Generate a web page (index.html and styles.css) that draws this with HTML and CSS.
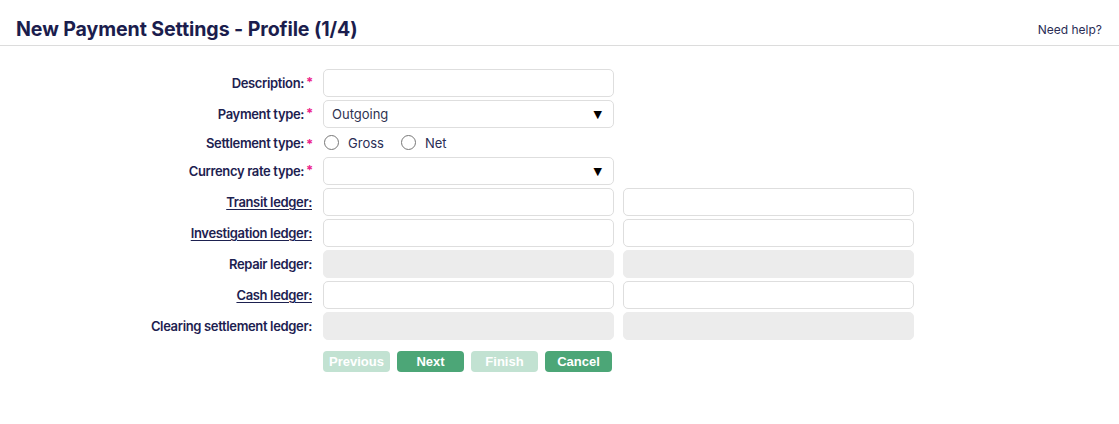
FILE: index.html
```html
<!DOCTYPE html>
<html>
<head>
<meta charset="utf-8">
<link rel="stylesheet" href="styles.css">
</head>
<body>
<header class="header">
  <h1 class="title">New Payment Settings - Profile (1/4)</h1>
  <a class="help" href="#">Need help?</a>
</header>
<form class="form">
  <label class="label">Description:<span class="req">*</span></label>
  <div class="input"></div>
  <div></div>

  <label class="label">Payment type:<span class="req">*</span></label>
  <div class="input select"><span class="value">Outgoing</span><span class="arrow">▼</span></div>
  <div></div>

  <label class="label">Settlement type:<span class="req">*</span></label>
  <div class="radios">
    <span class="radio"></span><span class="rlabel">Gross</span>
    <span class="radio"></span><span class="rlabel">Net</span>
  </div>
  <div></div>

  <label class="label">Currency rate type:<span class="req">*</span></label>
  <div class="input select"><span class="value"></span><span class="arrow">▼</span></div>
  <div></div>

  <label class="label"><a class="link" href="#">Transit ledger:</a></label>
  <div class="input"></div>
  <div class="input"></div>

  <label class="label"><a class="link" href="#">Investigation ledger:</a></label>
  <div class="input"></div>
  <div class="input"></div>

  <label class="label">Repair ledger:</label>
  <div class="input disabled"></div>
  <div class="input disabled"></div>

  <label class="label"><a class="link" href="#">Cash ledger:</a></label>
  <div class="input"></div>
  <div class="input"></div>

  <label class="label">Clearing settlement ledger:</label>
  <div class="input disabled"></div>
  <div class="input disabled"></div>

  <div></div>
  <div class="buttons">
    <button type="button" class="btn off">Previous</button>
    <button type="button" class="btn">Next</button>
    <button type="button" class="btn off">Finish</button>
    <button type="button" class="btn">Cancel</button>
  </div>
</form>
</body>
</html>
```
FILE: styles.css
```css
* { box-sizing: border-box; }
body {
  margin: 0;
  background: #fff;
  font-family: Inter, "Noto Sans", sans-serif;
  color: #1d2150;
}
.header {
  height: 46px;
  border-bottom: 1px solid #dcdcdc;
  display: flex;
  align-items: center;
  justify-content: space-between;
  padding: 0 17px 0 16px;
}
.title {
  margin: 0;
  font-size: 19.6px;
  font-weight: 700;
  color: #1b1d4d;
  letter-spacing: -0.1px;
  padding-top: 12px;
}
.help {
  font-size: 12px;
  color: #2a2d55;
  text-decoration: none;
  padding-top: 14px;
}
.form {
  display: grid;
  grid-template-columns: 312px 302px 300px;
  grid-template-rows: 28px 28px 23px repeat(6, 28px) 32px;
  row-gap: 3px;
  margin-top: 23px;
}
.label {
  display: flex;
  align-items: center;
  justify-content: flex-end;
  font-size: 13px;
  font-weight: 600;
  letter-spacing: -0.35px;
  color: #1d2150;
  white-space: nowrap;
}
.req {
  color: #ec1f8c;
  font-size: 13px;
  font-weight: 700;
  align-self: flex-start;
  margin-top: 5px;
  margin-left: 2px;
  margin-right: -1px;
}
.link {
  color: #1d2150;
  text-decoration: underline;
  text-underline-offset: 2px;
}
.input {
  justify-self: end;
  width: 291px;
  height: 28px;
  border: 1px solid #dedede;
  border-radius: 5px;
  background: #fff;
}
.input.disabled {
  background: #ececec;
  border-color: #ececec;
}
.select {
  display: flex;
  align-items: center;
  justify-content: space-between;
  padding: 0 11px 0 8px;
}
.value {
  font-size: 13px;
  color: #2f3350;
}
.arrow {
  font-size: 11px;
  color: #000;
  font-family: "DejaVu Sans", sans-serif;
}
.radios {
  justify-self: end;
  width: 291px;
  display: flex;
  align-items: center;
  font-size: 13px;
  color: #2a2d55;
}
.radio {
  width: 15px;
  height: 15px;
  border: 1px solid #777;
  border-radius: 50%;
  margin-left: 1px;
}
.rlabel { margin-left: 9px; margin-right: 16px; }
.buttons {
  justify-self: end;
  width: 291px;
  display: flex;
  gap: 7px;
  margin-top: 8px;
  height: 21px;
}
.btn {
  width: 67px;
  height: 21px;
  border: none;
  border-radius: 4px;
  background: #4ca677;
  color: #fff;
  font-family: "Liberation Sans", Arial, sans-serif;
  font-weight: 700;
  font-size: 13px;
  padding: 0;
}
.btn.off { background: #c2e2d2; }
```
